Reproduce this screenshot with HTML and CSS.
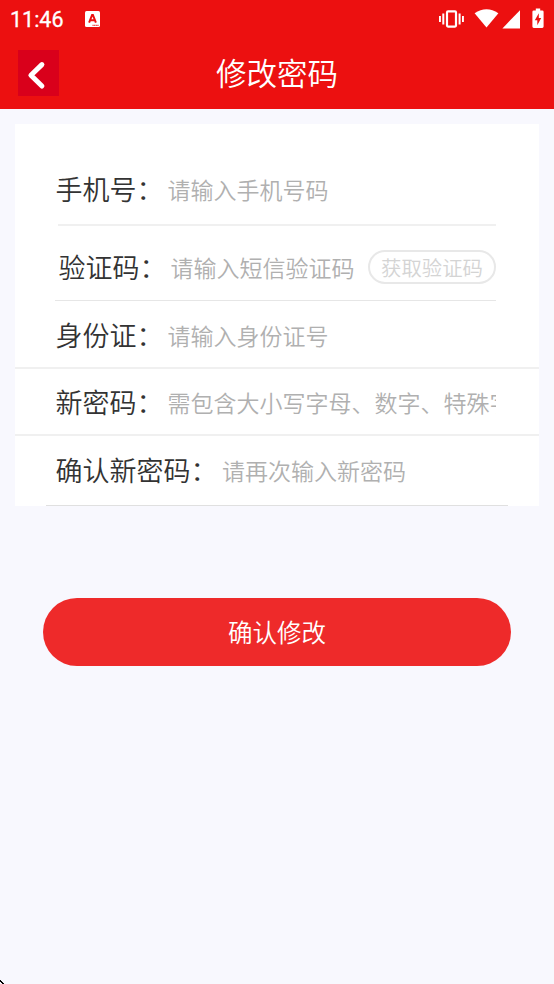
FILE: index.html
```html
<!DOCTYPE html>
<html lang="zh-CN">
<head>
    <meta charset="UTF-8">
    <meta name="viewport" content="width=device-width, initial-scale=1.0">
    <title>修改密码</title>
    <link rel="stylesheet" href="styles.css">
</head>
<body>
    <header class="header">
        <div class="status-bar">
            <span class="time">11:46</span>
            <svg class="app-icon" width="15" height="16" viewBox="0 0 15 16">
                <rect width="15" height="16" rx="1.5" fill="#fff"/>
                <path d="M4.1 11.6L7.1 4h.8l3 7.6M5.3 9.2h4.4" fill="none" stroke="#ec1010" stroke-width="2"/>
                <path d="M7.5 14.3h6.5" stroke="#ec1010" stroke-width="1" stroke-dasharray="1.2 .4"/>
            </svg>
            <svg class="system-icons" width="108" height="22" viewBox="0 0 108 22" fill="#fff">
                <rect x="8" y="3.4" width="9" height="15.2" rx="1" fill="none" stroke="#fff" stroke-width="2.2"/>
                <path d="M0 8h1.9v6H0zM3.3 5.5h2v11h-2zM19.6 5.5h2v11h-2zM23 8h1.9v6H23z"/>
                <path d="M35.6 5.3Q47.5-2.8 59.4 5.3L47.5 19.6z"/>
                <path d="M81 2.2v18.2H63.4z"/>
                <path d="M96.8.4h4.4v2h2a1.4 1.4 0 0 1 1.4 1.4v14.8a1.4 1.4 0 0 1-1.4 1.4h-8.4a1.4 1.4 0 0 1-1.4-1.4V3.8a1.4 1.4 0 0 1 1.4-1.4h2z"/>
                <path d="M99.8 5.2V10h2.4l-3.9 7.2v-4.9h-2.5z" fill="#ec1010"/>
            </svg>
        </div>
        <div class="nav-bar">
            <button type="button" class="back" onclick="history.back()" aria-label="返回">
                <svg width="41" height="46" viewBox="0 0 41 46">
                    <path d="M23.9 14.6L12.9 25.3l11 10.7" fill="none" stroke="#fff" stroke-width="5" stroke-linecap="round" stroke-linejoin="round"/>
                </svg>
            </button>
            <h1>修改密码</h1>
        </div>
    </header>

    <form id="passwordForm">
        <div class="card">
            <div class="row row-phone">
                <label for="phone">手机号：</label>
                <input type="text" id="phone" placeholder="请输入手机号码">
            </div>
            <div class="row row-code">
                <label for="code">验证码：</label>
                <input type="text" id="code" placeholder="请输入短信验证码">
                <button type="button" class="get-code">获取验证码</button>
            </div>
            <div class="row row-id">
                <label for="idCard">身份证：</label>
                <input type="text" id="idCard" placeholder="请输入身份证号">
            </div>
            <div class="row row-new">
                <label for="newPassword">新密码：</label>
                <input type="password" id="newPassword" placeholder="需包含大小写字母、数字、特殊字符">
            </div>
            <div class="row row-confirm">
                <label for="confirmPassword">确认新密码：</label>
                <input type="password" id="confirmPassword" placeholder="请再次输入新密码">
            </div>
        </div>
        <button type="button" class="submit">确认修改</button>
    </form>
    <svg class="corner" width="4" height="4" viewBox="0 0 4 4"><path d="M0 0h1v1h1v1h1v1h1v1H2V3H1V2H0z"/></svg>
</body>
</html>
```

FILE: styles.css
```css
* {
    box-sizing: border-box;
}

body {
    font-family: "Noto Sans CJK SC DemiLight", "Noto Sans CJK SC", sans-serif;
    font-weight: 350;
    background-color: #f8f8fe;
    margin: 0;
    height: 984px;
    position: relative;
}

button, input {
    font-family: inherit;
    font-weight: inherit;
    padding: 0;
    border: none;
    background: none;
}

.header {
    height: 109px;
    background-color: #ec1010;
    color: #fff;
}

.status-bar {
    display: flex;
    align-items: center;
    height: 38px;
    padding: 0 7px 0 10px;
}

.time {
    width: 75px;
    padding-top: 2px;
    font-family: Roboto, sans-serif;
    font-size: 21.5px;
    font-weight: 400;
    -webkit-text-stroke: 0.3px #fff;
    line-height: 36px;
}

.app-icon {
    margin-bottom: 1px;
}

.system-icons {
    margin-left: auto;
    margin-bottom: 1px;
}

.nav-bar {
    display: grid;
    grid-template-columns: 41px 1fr 41px;
    padding: 12px 18px 0;
}

.back {
    height: 46px;
    background-color: #d9001b;
}

.back svg {
    display: block;
}

h1 {
    margin: 0;
    font-size: 30.5px;
    font-weight: inherit;
    line-height: 44px;
    text-align: center;
}

.card {
    width: 524px;
    height: 382px;
    margin: 15px 0 0 15px;
    padding-top: 31px;
    background-color: #fff;
}

.row {
    display: flex;
    align-items: center;
    padding: 1px 43px 0 40.5px;
}

.row label {
    flex: none;
    width: 112px;
    font-size: 27px;
    line-height: 40px;
    color: #333;
    white-space: nowrap;
}

.row input {
    flex: 1;
    min-width: 0;
    height: 40px;
    font-size: 23px;
    outline: none;
}

.row input::placeholder {
    color: #b0b0b0;
    opacity: 1;
}

.row-phone {
    height: 71px;
    margin: 0 43px;
    padding: 0 0 2px;
    border-bottom: 2px solid #f0f0f0;
}

.row-phone label {
    margin-left: -2.5px;
}

.row-code {
    height: 75px;
    margin: 0 43px 0 40px;
    padding: 8px 0 0 3.5px;
    border-bottom: 1px solid #e6e6e6;
}

.get-code {
    width: 128px;
    height: 34px;
    border: 2px solid #e8e8e8;
    border-radius: 17px;
    font-size: 20.4px;
    line-height: 30px;
    color: #d4d4d4;
}

.row-id {
    height: 68px;
    border-bottom: 2px solid #f0f0f0;
}

.row-new {
    height: 67px;
    border-bottom: 2px solid #f0f0f0;
}

.row-confirm {
    height: 70px;
    margin: 0 31px;
    padding: 0 12px 2px 9.5px;
    border-bottom: 1px solid #e0e0e0;
}

.row-confirm label {
    width: 166.5px;
}

.submit {
    display: block;
    width: 468px;
    height: 68px;
    margin: 92px 0 0 43px;
    padding-bottom: 2px;
    border-radius: 34px;
    background-color: #ee2a2a;
    color: #fff;
    font-size: 24.5px;
}

.corner {
    position: absolute;
    left: 0;
    bottom: 0;
}
```
